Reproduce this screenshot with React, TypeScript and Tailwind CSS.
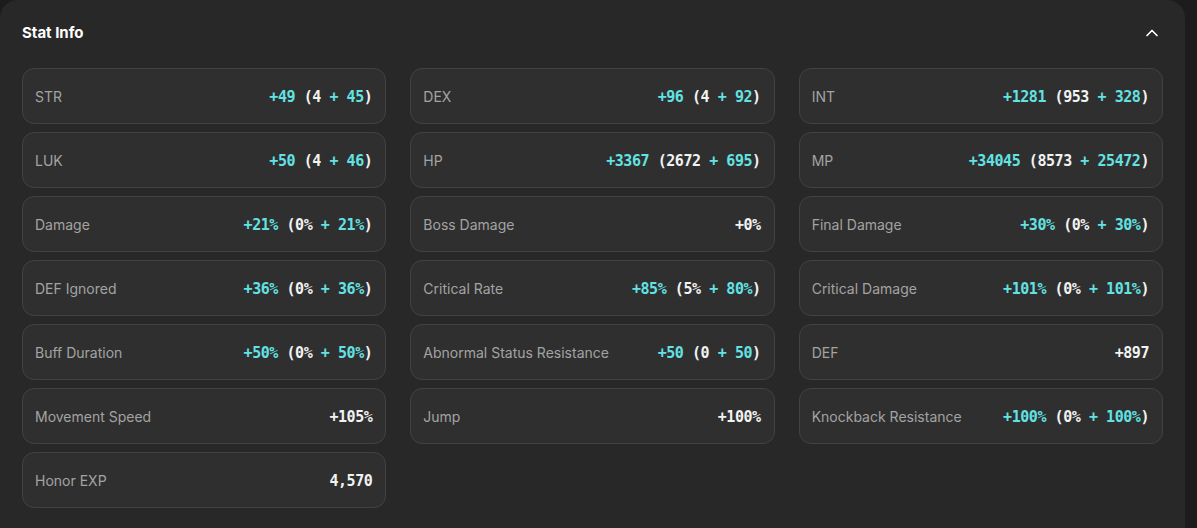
import { ChevronUp } from "lucide-react";

type Stat = { label: string; total: string; base?: string; add?: string };

const stats: Stat[] = [
  { label: "STR", total: "+49", base: "4", add: "45" },
  { label: "DEX", total: "+96", base: "4", add: "92" },
  { label: "INT", total: "+1281", base: "953", add: "328" },
  { label: "LUK", total: "+50", base: "4", add: "46" },
  { label: "HP", total: "+3367", base: "2672", add: "695" },
  { label: "MP", total: "+34045", base: "8573", add: "25472" },
  { label: "Damage", total: "+21%", base: "0%", add: "21%" },
  { label: "Boss Damage", total: "+0%" },
  { label: "Final Damage", total: "+30%", base: "0%", add: "30%" },
  { label: "DEF Ignored", total: "+36%", base: "0%", add: "36%" },
  { label: "Critical Rate", total: "+85%", base: "5%", add: "80%" },
  { label: "Critical Damage", total: "+101%", base: "0%", add: "101%" },
  { label: "Buff Duration", total: "+50%", base: "0%", add: "50%" },
  { label: "Abnormal Status Resistance", total: "+50", base: "0", add: "50" },
  { label: "DEF", total: "+897" },
  { label: "Movement Speed", total: "+105%" },
  { label: "Jump", total: "+100%" },
  { label: "Knockback Resistance", total: "+100%", base: "0%", add: "100%" },
  { label: "Honor EXP", total: "4,570" },
];

const StatCard = ({ stat }: { stat: Stat }) => {
  const hasParts = stat.base !== undefined;
  return (
    <div className="h-[56px] flex items-center justify-between pl-[12px] pr-[13px] rounded-[12px] bg-[#2f2f2f] border border-[#424242]">
      {/* label */}
      <span className="mt-[1px] text-[14px] text-[#a3a3a3]">{stat.label}</span>
      {/* value */}
      <span className="mt-[3px] font-['DejaVu_Sans_Mono',monospace] text-[15px] tracking-[-0.45px] font-semibold whitespace-pre">
        {hasParts ? (
          <>
            <span className="text-[#63e2e4]">{stat.total}</span>
            <span className="text-[#f2f2f2]"> ({stat.base}</span>
            <span className="text-[#63e2e4]"> + {stat.add}</span>
            <span className="text-[#f2f2f2]">)</span>
          </>
        ) : (
          <span className="text-[#f2f2f2]">{stat.total}</span>
        )}
      </span>
    </div>
  );
};

export default function App() {
  return (
    <div className="min-h-screen bg-[#1c1c1c] font-['Inter','Liberation_Sans',sans-serif]">
      <section className="w-[1185px] min-h-[560px] bg-[#282828] rounded-[18px] px-[22px] pt-[21px] pb-[30px]">
        {/* header */}
        <div className="flex items-center justify-between h-[24px]">
          <h2 className="text-[15px] font-bold text-white">Stat Info</h2>
          <button className="text-white mr-[1px]">
            <ChevronUp size={20} strokeWidth={2} />
          </button>
        </div>

        {/* stat grid */}
        <div className="mt-[23px] grid grid-cols-3 gap-x-[24px] gap-y-[8px]">
          {stats.map(s => (
            <StatCard key={s.label} stat={s} />
          ))}
        </div>
      </section>
    </div>
  );
}
